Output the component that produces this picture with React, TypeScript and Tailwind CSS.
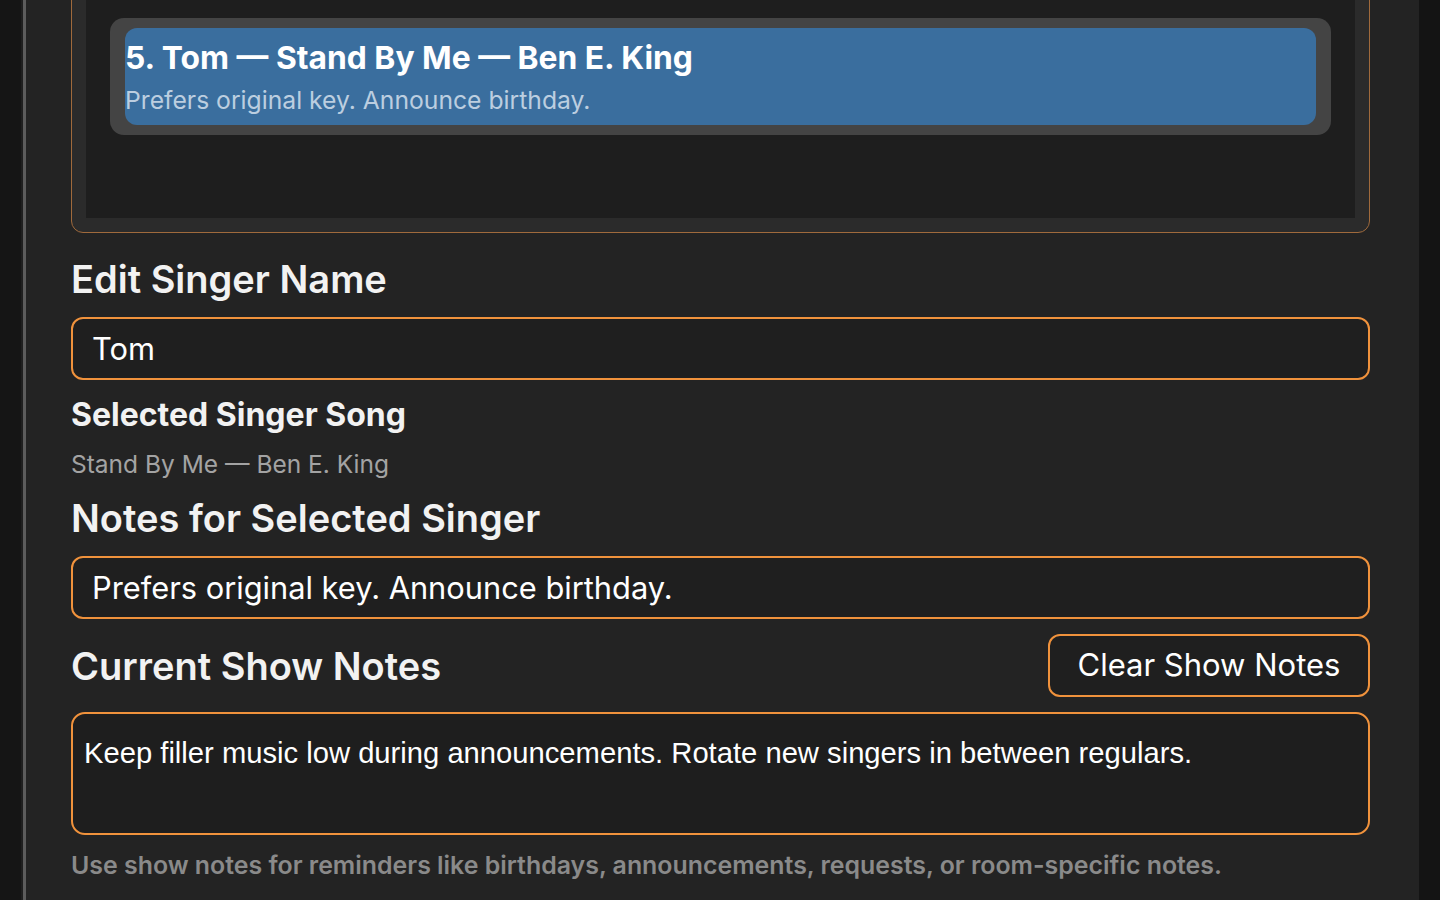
import React from "react";

type QueueEntry = { position: number; singer: string; song: string; artist: string; notes: string };

const selected: QueueEntry = {
  position: 5,
  singer: "Tom",
  song: "Stand By Me",
  artist: "Ben E. King",
  notes: "Prefers original key. Announce birthday.",
};

const showNotes = "Keep filler music low during announcements. Rotate new singers in between regulars.";

const sans = "font-['Inter','Noto_Sans',sans-serif]";

const QueueList = ({ entry }: { entry: QueueEntry }) => {
  return (
    <div className="-mt-[40px] rounded-[12px] border border-[#a06a3c] bg-[#2b2b2b] p-[14px]">
      <div className="bg-[#1e1e1e] px-[24px] pt-[43px] pb-[83px]">
        <div className="rounded-[14px] bg-[#444444] px-[15px] py-[10px]">
          <div className="rounded-[12px] bg-[#3a6e9e] pt-[11px] pb-[10px]">
            <div className={`${sans} text-[31.8px] leading-[38px] font-bold text-white`}>
              {entry.position}. {entry.singer} — {entry.song} — {entry.artist}
            </div>
            <div className={`${sans} mt-[8px] text-[24.7px] leading-[30px] text-[#bccee0]`}>{entry.notes}</div>
          </div>
        </div>
      </div>
    </div>
  );
};

const SectionHeader = ({ children }: { children: React.ReactNode }) => (
  <h2 className={`${sans} text-[38px] leading-[44px] font-semibold text-[#f2f2f2]`}>{children}</h2>
);

const TextField = ({ value }: { value: string }) => (
  <div className="flex h-[63px] items-center rounded-[12px] border-2 border-[#f0923c] bg-[#1f1f1f] px-[19px]">
    <span className={`${sans} text-[30.8px] leading-[36px] text-white`}>{value}</span>
  </div>
);

export default function App() {
  return (
    <div className="flex h-[900px] w-full overflow-hidden bg-[#151515]">
      <div className="w-[21px] shrink-0 bg-[#151515]" />
      <div className="w-[2px] shrink-0 bg-[#1f1f1f]" />
      <div className="w-[3px] shrink-0 bg-[#5c5c5c]" />
      <div className="w-[1393px] shrink-0 bg-[#232323] pl-[45px]">
        <div className="flex w-[1299px] flex-col">
          <QueueList entry={selected} />

          <div className="mt-[24px]">
            <SectionHeader>Edit Singer Name</SectionHeader>
          </div>
          <div className="mt-[16px]">
            <TextField value={selected.singer} />
          </div>

          <div className={`${sans} mt-[17px] text-[32px] leading-[36px] font-bold text-[#f2f2f2]`}>
            Selected Singer Song
          </div>
          <div className={`${sans} mt-[16px] text-[24.5px] leading-[30px] text-[#a3a3a3]`}>
            {selected.song} — {selected.artist}
          </div>

          <div className="mt-[17px]">
            <SectionHeader>Notes for Selected Singer</SectionHeader>
          </div>
          <div className="mt-[16px]">
            <TextField value={selected.notes} />
          </div>

          <div className="mt-[15px] flex items-center justify-between">
            <SectionHeader>Current Show Notes</SectionHeader>
            <button
              className={`${sans} flex h-[63px] w-[322px] items-center justify-center rounded-[12px] border-2 border-[#f0923c] bg-[#1f1f1f] text-[31px] text-white`}
            >
              Clear Show Notes
            </button>
          </div>

          <div className="mt-[15px] h-[123px] rounded-[14px] border-2 border-[#f0923c] bg-[#1e1e1e] px-[11px] pt-[22px]">
            <p className="font-['Liberation_Sans',Arial,sans-serif] text-[29.2px] leading-[34px] text-white">{showNotes}</p>
          </div>

          <p className={`${sans} mt-[15px] text-[24.9px] leading-[30px] font-semibold text-[#8a8a8a]`}>
            Use show notes for reminders like birthdays, announcements, requests, or room-specific notes.
          </p>
        </div>
      </div>
      <div className="flex-1 bg-[#141414]" />
    </div>
  );
}
